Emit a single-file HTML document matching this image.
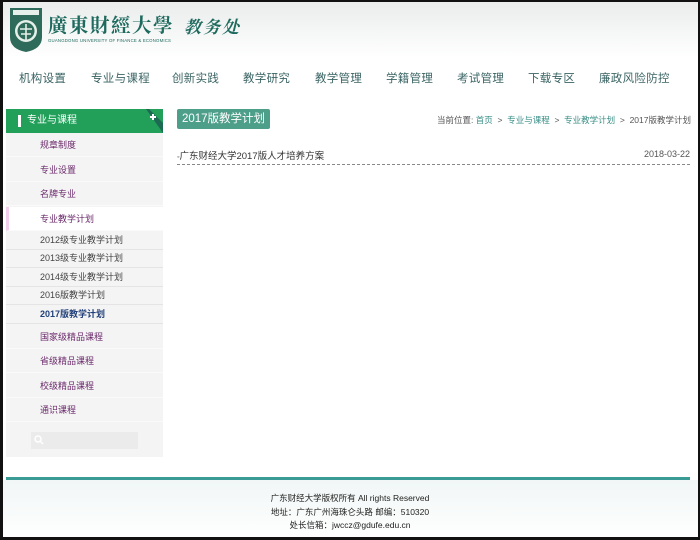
<!DOCTYPE html>
<html><head><meta charset="utf-8"><style>
*{margin:0;padding:0;box-sizing:border-box}
body{width:700px;height:540px;overflow:hidden;background:#fff;font-family:"Liberation Sans","Noto Sans CJK SC",sans-serif;position:relative}
.frame{position:absolute;left:0;top:0;width:700px;height:540px;border:3px solid #111;border-top-width:2px;border-right-width:2px;z-index:10;pointer-events:none}
.hdr{position:absolute;left:0;top:0;width:700px;height:58px;background:linear-gradient(#e9eceb,#fff)}
.nav{position:absolute;top:70px;font-size:11.5px;letter-spacing:.3px;color:#3b6464}
.side{position:absolute;left:6px;top:109px;width:157px;height:348px;background:#f4f4f4}
.sh{position:absolute;left:6px;top:109px;width:157px;height:24px;background:#22a05a;color:#fff;font-size:10px;line-height:24px;padding-left:21px}
.sh:before{content:"";position:absolute;left:12px;top:6px;width:3px;height:12px;background:#fff}
.it{position:absolute;left:6px;width:157px;font-size:9px;color:#6b2a6b;padding-left:34px;border-bottom:1px solid #fafafa}
.sub{position:absolute;left:6px;width:157px;font-size:9px;color:#444;padding-left:34px;border-bottom:1px solid #e4e4e4;height:19px;line-height:18px}
.ttl{position:absolute;left:177px;top:109px;width:93px;height:20px;background:#4e9f8a;border-radius:2px;color:#fff;font-size:11.5px;line-height:20px;text-align:center}
.crumb{position:absolute;right:9px;top:114px;font-size:8.5px;color:#555}
.crumb span{color:#3a8f87}
.row{position:absolute;left:177px;top:148px;width:513px;height:17px;border-bottom:1px dashed #888;font-size:9.5px;color:#333}
.foot{position:absolute;left:6px;top:477px;width:684px;height:3px;background:#3a9b94}
.fb{position:absolute;left:0;top:480px;width:700px;height:60px;background:linear-gradient(#f1f6f6,#fff)}
.ft{position:absolute;left:0;width:700px;text-align:center;font-size:8.5px;color:#222}
</style></head><body>
<div class="hdr"></div>
<svg style="position:absolute;left:9px;top:7px" width="34" height="46" viewBox="0 0 34 46">
<path d="M1 1H33V30Q33 42 17 45Q1 42 1 30Z" fill="#2f6b5a"/>
<rect x="4" y="3" width="26" height="5" fill="#e6efe9"/>
<circle cx="17" cy="24" r="11" fill="#e6efe9"/><circle cx="17" cy="24" r="8.5" fill="#2f6b5a"/>
<path d="M17 17V33M11 22H23M12 27H22" stroke="#e6efe9" stroke-width="1.6"/>
</svg>
<div style="position:absolute;left:48px;top:13px;font-size:19.5px;line-height:22px;color:#1e6a5e;font-family:'Noto Serif CJK SC',serif;letter-spacing:1.5px;font-weight:bold">廣東財經大學</div>
<div style="position:absolute;left:184px;top:16px;font-size:17px;line-height:20px;color:#1e6a5e;font-family:'Noto Serif CJK SC',serif;font-weight:bold;letter-spacing:2px;font-style:italic">教务处</div>
<div style="position:absolute;left:48px;top:38px;font-size:4.3px;color:#1e6a5e;letter-spacing:.2px">GUANGDONG UNIVERSITY OF FINANCE &amp; ECONOMICS</div>
<div class="nav" style="left:19px">机构设置</div>
<div class="nav" style="left:91px">专业与课程</div>
<div class="nav" style="left:172px">创新实践</div>
<div class="nav" style="left:243px">教学研究</div>
<div class="nav" style="left:315px">教学管理</div>
<div class="nav" style="left:386px">学籍管理</div>
<div class="nav" style="left:457px">考试管理</div>
<div class="nav" style="left:528px">下载专区</div>
<div class="nav" style="left:599px">廉政风险防控</div>

<div class="side"></div>
<div class="sh">专业与课程</div>
<svg style="position:absolute;left:146px;top:109px" width="17" height="24"><path d="M0 0H3L17 14V24Z" fill="#1d6a52"/><path d="M4 8H10M7 5V11" stroke="#fff" stroke-width="2"/></svg>
<div class="it" style="top:133px;height:24px;line-height:24px">规章制度</div>
<div class="it" style="top:158px;height:24px;line-height:24px">专业设置</div>
<div class="it" style="top:182px;height:24px;line-height:24px">名牌专业</div>
<div class="it" style="top:207px;height:24px;line-height:24px;background:#fff;border-left:3px solid #f2d0ec;padding-left:31px">专业教学计划</div>
<div class="sub" style="top:231px">2012级专业教学计划</div>
<div class="sub" style="top:249px">2013级专业教学计划</div>
<div class="sub" style="top:268px">2014级专业教学计划</div>
<div class="sub" style="top:286px">2016版教学计划</div>
<div class="sub" style="top:305px;color:#22407a;font-weight:bold">2017版教学计划</div>
<div class="it" style="top:325px;height:24px;line-height:24px">国家级精品课程</div>
<div class="it" style="top:349px;height:24px;line-height:24px">省级精品课程</div>
<div class="it" style="top:374px;height:24px;line-height:24px">校级精品课程</div>
<div class="it" style="top:398px;height:24px;line-height:24px">通识课程</div>
<div style="position:absolute;left:31px;top:432px;width:107px;height:17px;background:#ebebeb"></div>
<svg style="position:absolute;left:34px;top:435px" width="10" height="10"><circle cx="4" cy="4" r="3" stroke="#fff" stroke-width="1.5" fill="none"/><path d="M6 6L9 9" stroke="#fff" stroke-width="1.5"/></svg>

<div class="ttl">2017版教学计划</div>
<div class="crumb">当前位置: <span>首页</span> &nbsp;&gt;&nbsp; <span>专业与课程</span> &nbsp;&gt;&nbsp; <span>专业教学计划</span> &nbsp;&gt;&nbsp; 2017版教学计划</div>
<div class="row"><span style="font-size:7px">◦</span>广东财经大学2017版人才培养方案<span style="position:absolute;right:0;top:1px;font-size:9px;color:#555">2018-03-22</span></div>

<div class="fb"></div>
<div class="foot"></div>
<div class="ft" style="top:492px">广东财经大学版权所有 All rights Reserved</div>
<div class="ft" style="top:506px">地址：广东广州海珠仑头路 邮编：510320</div>
<div class="ft" style="top:519px">处长信箱：jwccz@gdufe.edu.cn</div>
<div class="frame"></div>
</body></html>
